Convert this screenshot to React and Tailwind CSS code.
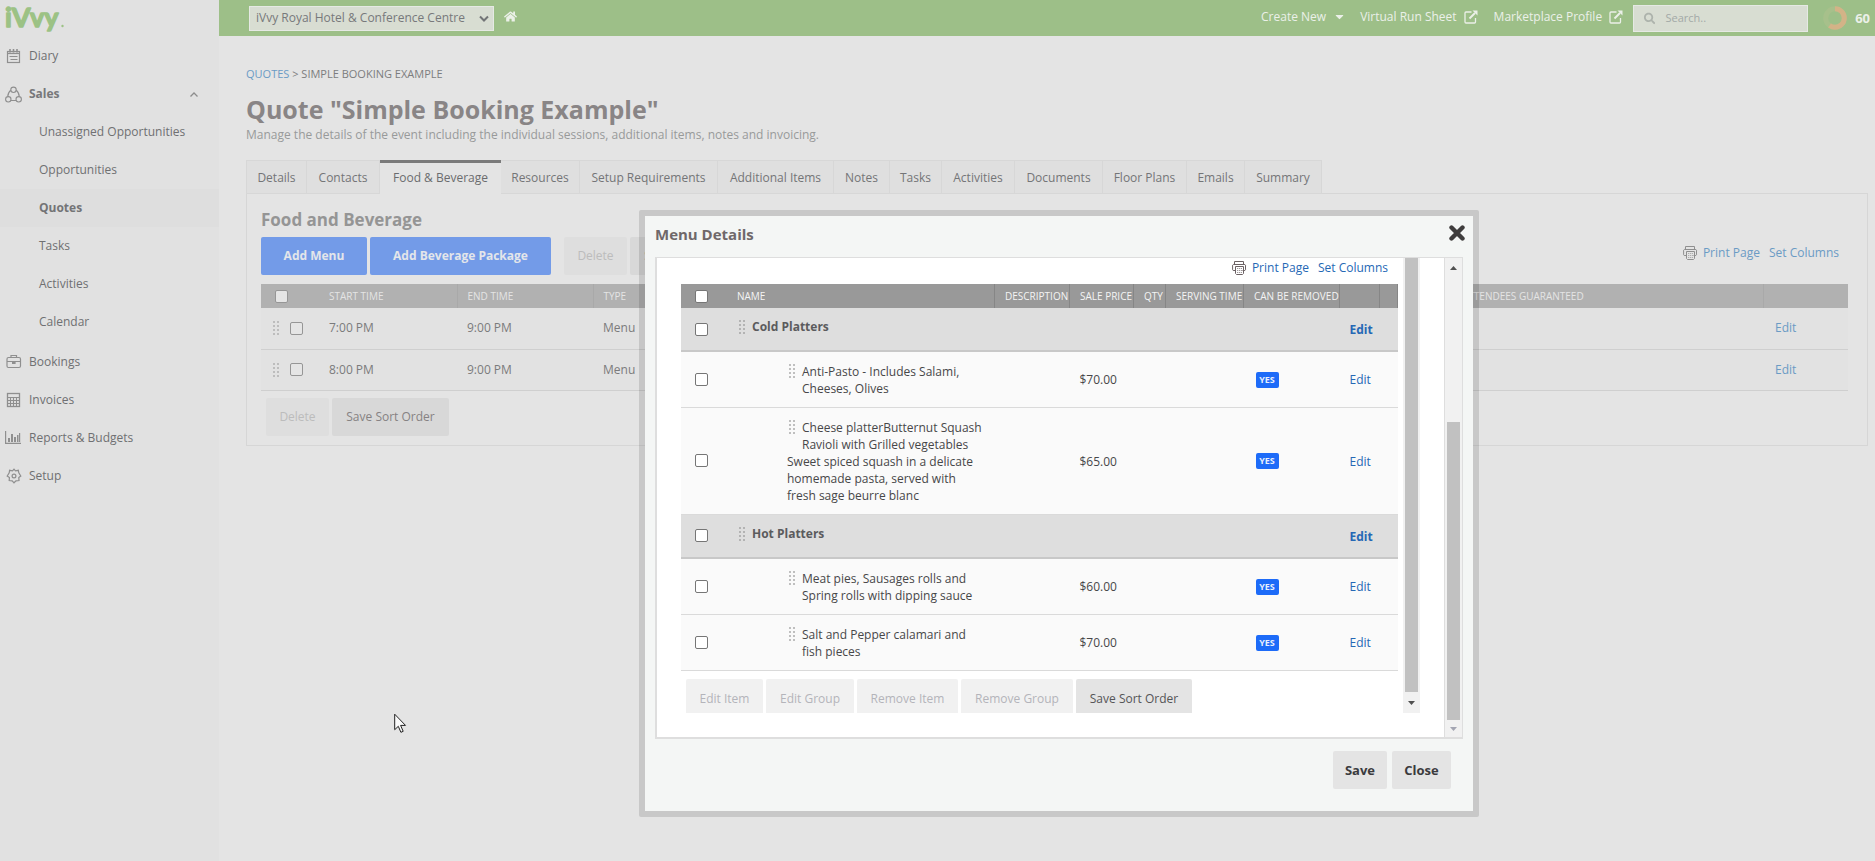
import React from "react";
import { FaHome, FaSearch, FaCaretDown } from "react-icons/fa";

const DiaryIcon = () => (
  <svg width="16" height="16" viewBox="0 0 16 16" fill="none" stroke="currentColor">
    <rect x="1.500" y="3.500" width="12" height="11" strokeWidth="1.200" />
    <path d="M1.500 5.500H13.500" strokeWidth="1.200" />
    <path d="M4 1v3.500M7.500 1v3.500M11 1v3.500" strokeWidth="1.600" />
    <path d="M3.500 8.500h8M4.500 11.500h7" strokeWidth="1.200" />
  </svg>
);
const SalesIcon = () => (
  <svg width="17" height="17" viewBox="0 0 17 17" fill="none" stroke="currentColor" strokeWidth="1.1">
    <circle cx="8.500" cy="3.800" r="2.700" />
    <circle cx="3.300" cy="13.300" r="2.700" />
    <circle cx="13.700" cy="13.300" r="2.700" />
    <path d="M5.800 4.200Q2.900 6.500 2.700 10.600M11.200 4.200Q14.100 6.500 14.300 10.600M6 14.500h5" />
  </svg>
);
const BookingsIcon = () => (
  <svg width="16" height="16" viewBox="0 0 16 16" fill="none" stroke="currentColor">
    <rect x="1" y="3.500" width="13.500" height="10" rx="1.500" strokeWidth="1.200" />
    <path d="M5 3.500v-2h5.500v2M1 7.500h13.500" strokeWidth="1.200" />
    <rect x="6" y="7.500" width="3.600" height="2.500" fill="currentColor" stroke="none" />
  </svg>
);
const InvoicesIcon = () => (
  <svg width="16" height="16" viewBox="0 0 16 16" fill="none" stroke="currentColor">
    <rect x="1.500" y="1.500" width="12" height="13" strokeWidth="1.300" />
    <path d="M1.500 5.500h12M1.500 8.500h12M1.500 11.500h12M4.500 5.500v9M7.500 5.500v9M10.500 5.500v9" strokeWidth="1.100" />
  </svg>
);
const ReportsIcon = () => (
  <svg width="17" height="16" viewBox="0 0 17 16" fill="currentColor">
    <path d="M0 1h1.200v11.800H16V14H0zM3 8h2v4H3zM6 4h2v8H6zM9 7h2v5H9zM12 5h1.500v7H12zM14 3h1.200v9H14z" />
  </svg>
);
const SetupIcon = () => (
  <svg width="16" height="16" viewBox="0 0 16 16" fill="none" stroke="currentColor" strokeWidth="1.200">
    <path d="M6.500 2.800 8 1.200l1.500 1.600 2.800-.5.500 2.500L14.800 8l-2 1.500.2 3-3 .4L8 14.800l-1.800-1.900-3-.4.200-3L1.200 8l2-3.200.4-2.500z" />
    <circle cx="8" cy="8" r="1.900" />
  </svg>
);
const PrinterIcon = () => (
  <svg width="15" height="16" viewBox="0 0 15 16" fill="none" stroke="currentColor">
    <path d="M2.500 4.500v-3h9v3M3.500 10.500H1.200L.600 9.800V5.200l.700-.700h11.600l.600.700v4.600l-.600.700h-2.400" />
    <path d="M3.500 6.500h8v7l-1 1h-6l-1-1z" />
    <path d="M5 8.500h5M5 10.500h5M5 12.500h5" strokeDasharray="1.300 .700" strokeOpacity=".65" />
  </svg>
);

const Grip = () => (
  <svg className="shrink-0" width="6" height="14" viewBox="0 0 6 14" fill="currentColor" aria-hidden="true">
    {[0, 4, 8, 12].map((y) => (
      <g key={y}>
        <rect x="0" y={y} width="2" height="2" />
        <rect x="4" y={y} width="2" height="2" />
      </g>
    ))}
  </svg>
);

const Check = ({ label, dim }) => (
  <input
    type="checkbox"
    aria-label={label}
    className={
      dim
        ? "block size-[13px] shrink-0 appearance-none rounded-[2px] border border-[#969696] bg-[#e5e5e5]"
        : "block size-[13px] shrink-0 appearance-none rounded-[2px] border border-[#767676] bg-white"
    }
  />
);

const NavItem = ({ icon: Icon, label, bold, open }) => (
  <li>
    <a href="#" className={"flex h-[38px] items-center pr-[21px] pl-[5px] " + (bold ? "font-bold text-[#77787a]" : "")}>
      <span className="mr-[7px] flex w-[17px] justify-center text-[#8f8f8f]">
        <Icon />
      </span>
      <span className="flex-1">{label}</span>
      {open && (
        <svg width="8" height="5" viewBox="0 0 8 5" fill="none" stroke="#8d8d8d" strokeWidth="1.300">
          <path d="M.5 4.500 4 1l3.500 3.500" />
        </svg>
      )}
    </a>
  </li>
);

const subItems = ["Unassigned Opportunities", "Opportunities", "Quotes", "Tasks", "Activities", "Calendar"];

const tabs = [
  ["Details", "w-[61px]"],
  ["Contacts", "w-[73px]"],
  ["Food & Beverage", "w-[121px]"],
  ["Resources", "w-[79px]"],
  ["Setup Requirements", "w-[138px]"],
  ["Additional Items", "w-[116px]"],
  ["Notes", "w-[56px]"],
  ["Tasks", "w-[52px]"],
  ["Activities", "w-[73px]"],
  ["Documents", "w-[88px]"],
  ["Floor Plans", "w-[84px]"],
  ["Emails", "w-[58px]"],
  ["Summary", "w-[77px]"],
];

const menuRows = [
  { group: true, name: "Cold Platters", h: "h-[43px]" },
  { name: "Anti-Pasto - Includes Salami, Cheeses, Olives", price: "$70.00", h: "h-[56px]" },
  {
    name: "Cheese platterButternut Squash Ravioli with Grilled vegetables",
    note: "Sweet spiced squash in a delicate homemade pasta, served with fresh sage beurre blanc",
    price: "$65.00",
    h: "h-[107px]",
  },
  { group: true, name: "Hot Platters", h: "h-[44px]" },
  { name: "Meat pies, Sausages rolls and Spring rolls with dipping sauce", price: "$60.00", h: "h-[56px]" },
  { name: "Salt and Pepper calamari and fish pieces", price: "$70.00", h: "h-[56px]" },
];

function Sidebar() {
  return (
    <nav className="w-[219px] shrink-0 bg-[#e1e1e1] text-[#6f7072]">
      <a href="#" aria-label="iVvy home" className="block h-9">
        <svg width="70" height="36" viewBox="0 0 70 36" className="overflow-visible font-['Lato',sans-serif]">
          <text x="5" y="27" fontSize="27" fontWeight="700" fill="#9cc285" stroke="#9cc285" strokeWidth="1.400" strokeLinejoin="round">
            iVvy
          </text>
          <circle cx="62.500" cy="26" r="1.200" fill="#9cc285" />
        </svg>
      </a>
      <ul className="pt-px">
        <NavItem icon={DiaryIcon} label="Diary" />
        <NavItem icon={SalesIcon} label="Sales" bold open />
        <li>
          <ul className="pb-[2px]">
            {subItems.map((s) => (
              <li key={s} className={s === "Quotes" ? "bg-[#dedede] font-bold text-[#737476]" : ""}>
                <a href="#" className="flex h-[38px] items-center pl-[39px]">
                  {s}
                </a>
              </li>
            ))}
          </ul>
        </li>
        <NavItem icon={BookingsIcon} label="Bookings" />
        <NavItem icon={InvoicesIcon} label="Invoices" />
        <NavItem icon={ReportsIcon} label="Reports & Budgets" />
        <NavItem icon={SetupIcon} label="Setup" />
      </ul>
    </nav>
  );
}

const LinkOut = () => (
  <svg width="14" height="14" viewBox="0 0 14 14" fill="none" stroke="currentColor">
    <path d="M7.500 2H2Q1 2 1 3v9q0 1 1 1h8.500q1 0 1-1V8" strokeWidth="1.300" />
    <path d="M5.500 8.500 11 3" strokeWidth="2" />
    <path d="M8.500.500H13.500V5.500z" fill="currentColor" stroke="none" />
  </svg>
);

function TopBar() {
  return (
    <header className="flex h-9 items-center bg-[#9dbf88] pl-[30px] text-[#ebf0e8]">
      <div className="relative">
        <select
          aria-label="Venue"
          className="h-[25px] w-[245px] appearance-none border border-[#e6e9e4] bg-[#d8ddd2] pl-[6px] text-[#77797b]"
        >
          <option>iVvy Royal Hotel &amp; Conference Centre</option>
        </select>
        <svg className="pointer-events-none absolute top-[9px] right-[5px]" width="10" height="7" viewBox="0 0 10 7" fill="none" stroke="#727476" strokeWidth="2">
          <path d="M1 1.500l4 4 4-4" />
        </svg>
      </div>
      <a href="#" aria-label="Home" className="ml-[10px] pb-[3px]">
        <FaHome size={13} />
      </a>
      <div className="ml-auto flex items-center">
        <button className="mr-[14px] flex items-center gap-[7px] pb-[3px]">
          Create New <FaCaretDown size={13} />
        </button>
        <a href="#" className="mr-[16px] flex items-center gap-[7px] pb-[3px]">
          Virtual Run Sheet <LinkOut />
        </a>
        <a href="#" className="mr-[10px] flex items-center gap-[7px] pb-[3px]">
          Marketplace Profile <LinkOut />
        </a>
        <label className="flex h-[27px] w-[175px] items-center border border-[#e6e9e4] bg-[#d8ddd2] pl-[10px]">
          <FaSearch size={13} color="#adb3ac" />
          <input
            type="search"
            aria-label="Search"
            placeholder="Search.."
            className="ml-[10px] w-full min-w-0 bg-transparent text-[11px] outline-none placeholder:text-[#a3a9a7]"
          />
        </label>
        <svg className="ml-[15px]" width="24" height="24" viewBox="0 0 24 24" fill="none" strokeWidth="5">
          <circle cx="12" cy="12" r="9.300" stroke="#a7c08b" />
          <circle cx="12" cy="12" r="9.300" stroke="#d3b387" pathLength="100" strokeDasharray="60 40" transform="rotate(-90 12 12)" />
        </svg>
        <span className="mr-[5px] ml-[8px] text-[13px] font-bold">60</span>
      </div>
    </header>
  );
}

function PageTools({ dim }) {
  return (
    <div className={"flex items-center " + (dim ? "text-[#6b9bc5]" : "text-[#2568b5]")}>
      <span className={"mr-[5px] " + (dim ? "text-[#8f8f8f]" : "text-[#6b6163]")}>
        <PrinterIcon />
      </span>
      <a href="#" className="mr-[9px]">
        Print Page
      </a>
      <a href="#">Set Columns</a>
    </div>
  );
}

function Content() {
  return (
    <main className="pt-[29px] pr-[7px] pl-[27px]">
      <div className="text-[11px] leading-[18px] text-[#7c7d7e]">
        <a href="#" className="text-[#6b9bc5]">
          QUOTES
        </a>{" "}
        &gt; SIMPLE BOOKING EXAMPLE
      </div>
      <h1 className="mt-[9px] text-[25px] leading-[34px] font-bold text-[#898586]">Quote "Simple Booking Example"</h1>
      <p className="leading-[18px] text-[#989a9a]">
        Manage the details of the event including the individual sessions, additional items, notes and invoicing.
      </p>
      <div role="tablist" className="relative z-10 mt-[16px] -mb-px flex h-[34px] text-[#747577]">
        {tabs.map(([t, w]) => (
          <button
            key={t}
            role="tab"
            aria-selected={t === "Food & Beverage"}
            className={
              w +
              " shrink-0 whitespace-nowrap " +
              (t === "Food & Beverage"
                ? "border-t-[3px] border-t-[#7b7b7b] bg-[#e4e4e4] pb-[2px] text-[#6b6c6e]"
                : "border-y border-r border-[#d7d7d7] bg-[#dfdfdf] pt-[2px] first:border-l")
            }
          >
            {t}
          </button>
        ))}
      </div>
      <section className="border border-[#d6d6d6] px-[14px] pb-[9px]">
        <div className="flex items-end justify-between pt-[14px]">
          <div>
            <h2 className="text-[17px] leading-[24px] font-bold text-[#959595]">Food and Beverage</h2>
            <div className="mt-[5px] flex gap-[3px]">
              <button className="h-[38px] w-[106px] rounded-[2px] bg-[#739be8] font-bold text-[#e3e6ea]">Add Menu</button>
              <button className="h-[38px] w-[181px] rounded-[2px] bg-[#739be8] font-bold text-[#e3e6ea]">
                Add Beverage Package
              </button>
              <button disabled className="ml-[10px] h-[38px] w-[63px] rounded-[2px] bg-[#dedede] text-[#bcbcbc]">
                Delete
              </button>
              <button className="h-[38px] w-[117px] rounded-[2px] bg-[#d8d8d8] text-[#868283]">Save Sort Order</button>
            </div>
          </div>
          <div className="mr-[14px] mb-[13px]">
            <PageTools dim />
          </div>
        </div>
        <table className="mt-[9px] mr-[5px] w-[calc(100%-5px)] table-fixed text-left text-[#7b7b7c]">
          <thead className="bg-[#b1b1b1] text-[10px] text-[#e4e4e4]">
            <tr className="h-6">
              <th className="w-[58px] pl-[14px]">
                <Check dim label="Select all sessions" />
              </th>
              <th className="w-[138px] border-r border-[#a9a9a9] pl-[10px] font-medium">START TIME</th>
              <th className="w-[136px] border-r border-[#a9a9a9] pl-[10px] font-medium">END TIME</th>
              <th className="w-[859px] pl-[10px] font-medium">TYPE</th>
              <th className="pl-[10px] font-medium whitespace-nowrap">ATTENDEES GUARANTEED</th>
              <th className="w-[85px] border-l border-[#a9a9a9]" />
            </tr>
          </thead>
          <tbody>
            {["7:00 PM", "8:00 PM"].map((t) => (
              <tr key={t} className="h-[41px] border-b border-[#cfcfcf] bg-[#e2e2e2]">
                <td className="pl-[12px]">
                  <div className="flex items-center gap-[11px] text-[#bdbdbd]">
                    <Grip />
                    <Check dim label={"Select session at " + t} />
                  </div>
                </td>
                <td className="pl-[10px]">{t}</td>
                <td className="pl-[10px]">9:00 PM</td>
                <td className="pl-[10px]">Menu</td>
                <td />
                <td className="pl-[12px]">
                  <a href="#" className="text-[#6b9bc5]">
                    Edit
                  </a>
                </td>
              </tr>
            ))}
          </tbody>
        </table>
        <div className="mt-[7px] ml-[5px] flex gap-[3px]">
          <button disabled className="h-[38px] w-[63px] rounded-[2px] bg-[#dedede] text-[#bcbcbc]">
            Delete
          </button>
          <button className="h-[38px] w-[117px] rounded-[2px] bg-[#d8d8d8] text-[#868283]">Save Sort Order</button>
        </div>
      </section>
    </main>
  );
}

const Arrow = ({ up, light }) => (
  <svg className="shrink-0" width="7" height="4" viewBox="0 0 7 4" fill={light ? "#a3a5b2" : "#505050"} aria-hidden="true">
    <path d={up ? "M0 4 3.500 0 7 4z" : "M0 0 3.500 4 7 0z"} />
  </svg>
);

const headCell = "border-r border-[#868686] pl-[10px] font-medium whitespace-nowrap";

function MenuTable() {
  return (
    <table className="w-full table-fixed text-left text-[#474749]">
      <thead className="bg-[#999999] text-[10px] text-[#f4f4f4]">
        <tr className="h-6">
          <th className="w-[46px] pl-[14px]">
            <Check label="Select all items" />
          </th>
          <th className={headCell}>NAME</th>
          <th className={headCell + " w-[75px]"}>DESCRIPTION</th>
          <th className={headCell + " w-[64px]"}>SALE PRICE</th>
          <th className={headCell + " w-[32px]"}>QTY</th>
          <th className={headCell + " w-[78px]"}>SERVING TIME</th>
          <th className={headCell + " w-[96px]"}>CAN BE REMOVED</th>
          <th className={headCell + " w-[40px]"} />
          <th className={headCell + " w-[18px]"} />
        </tr>
      </thead>
      <tbody>
        {menuRows.map((r) =>
          r.group ? (
            <tr key={r.name} className={r.h + " border-b-2 border-[#c8c8c8] bg-[#dedede] font-bold text-[#5b5b5d]"}>
              <td className="pl-[14px]">
                <Check label={"Select " + r.name} />
              </td>
              <td className="pl-[12px]" colSpan={6}>
                <div className="mb-[4px] flex items-center gap-[7px]">
                  <span className="text-[#b3b3b3]">
                    <Grip />
                  </span>
                  {r.name}
                </div>
              </td>
              <td className="pt-[2px] pl-[10px]" colSpan={2}>
                <a href="#" className="text-[#2568b5]">
                  Edit
                </a>
              </td>
            </tr>
          ) : (
            <tr key={r.name} className={r.h + " border-b border-[#dadada] bg-[#fafafa]"}>
              <td className="pl-[14px]">
                <Check label={"Select " + r.name} />
              </td>
              <td className="pt-px pr-[8px] pl-[60px] leading-[17px]">
                <div className="flex gap-[7px]">
                  <span className="ml-[2px] pt-px text-[#bfbfbf]">
                    <Grip />
                  </span>
                  <span>{r.name}</span>
                </div>
                {r.note && <p className="pr-[8px]">{r.note}</p>}
              </td>
              <td />
              <td className="pt-[2px] pl-[10px]">{r.price}</td>
              <td />
              <td />
              <td className="pt-px pl-[12px]">
                <span className="block h-4 w-[23px] rounded-[2px] bg-[#1d6bf8] text-center text-[9px] leading-4 font-bold text-[#e8effd]">
                  YES
                </span>
              </td>
              <td className="pt-[2px] pl-[10px]" colSpan={2}>
                <a href="#" className="text-[#2568b5]">
                  Edit
                </a>
              </td>
            </tr>
          )
        )}
      </tbody>
    </table>
  );
}

function MenuDialog() {
  const off = "h-[38px] rounded-[2px] bg-[#f1f1f1] pt-[2px] text-[#b4b4ba] ";
  return (
    <div role="dialog" aria-label="Menu Details" className="w-[840px] rounded-[2px] bg-black/12 p-[6px]">
      <div className="bg-[#f4f6f5] px-[10px] pb-[22px]">
        <div className="flex h-[41px] items-start justify-between pt-[7px]">
          <h2 className="text-[15px] leading-[22px] font-bold text-[#6f686a]">Menu Details</h2>
          <button aria-label="Close dialog" className="-mr-[2px] pt-[2px]">
            <svg width="16" height="16" viewBox="0 0 16 16" fill="none" stroke="#3f3d3d" strokeWidth="4.400" strokeLinecap="round">
              <path d="M2.500 2.500l11 11M13.500 2.500l-11 11" />
            </svg>
          </button>
        </div>
        <div className="flex border border-b-2 border-l-2 border-[#dedede] bg-white">
          <div className="flex flex-1 pl-[24px]">
            <div className="h-[455px] flex-1 overflow-hidden">
              <div className="flex h-[26px] items-start justify-end pt-px pr-[10px]">
                <PageTools />
              </div>
              <MenuTable />
              <div className="mt-[8px] ml-[5px] flex gap-[3px]">
                <button disabled className={off + "w-[77px]"}>Edit Item</button>
                <button disabled className={off + "w-[88px]"}>Edit Group</button>
                <button disabled className={off + "w-[101px]"}>Remove Item</button>
                <button disabled className={off + "w-[112px]"}>Remove Group</button>
                <button className="h-[38px] w-[116px] rounded-[2px] bg-[#e4e4e4] pt-[2px] text-[#555557]">Save Sort Order</button>
              </div>
            </div>
            <div aria-hidden="true" className="mr-[24px] ml-[5px] flex h-[455px] w-[17px] flex-col items-center bg-[#f1f1f1]">
              <div className="w-[13px] flex-1 bg-[#c1c1c1]" />
              <div className="flex h-[21px] items-center">
                <Arrow />
              </div>
            </div>
          </div>
          <div aria-hidden="true" className="flex h-[479px] w-[18px] flex-col items-center border-l border-[#dedede] bg-[#f1f1f1]">
            <div className="flex h-[20px] items-center">
              <Arrow up />
            </div>
            <div className="mt-[144px] w-[13px] flex-1 bg-[#c1c1c1]" />
            <div className="flex h-[17px] items-center">
              <Arrow light />
            </div>
          </div>
        </div>
        <div className="mt-[12px] mr-[12px] flex justify-end gap-[5px] text-[13px] font-bold text-[#3b3b3e]">
          <button className="h-[38px] w-[54px] rounded-[2px] bg-[#e4e4e4]">Save</button>
          <button className="h-[38px] w-[59px] rounded-[2px] bg-[#e4e4e4]">Close</button>
        </div>
      </div>
    </div>
  );
}

export default function App() {
  return (
    <div className="relative flex min-h-screen overflow-hidden bg-[#e4e4e4] font-['Open_Sans',sans-serif] text-[12px] leading-[18px]">
      <Sidebar />
      <div className="min-w-0 flex-1">
        <TopBar />
        <Content />
      </div>
      <div className="absolute inset-0 z-20 flex items-start justify-center pt-[210px] pl-[243px]">
        <MenuDialog />
      </div>
      <svg className="absolute top-[713px] left-[394px] z-30" width="13" height="21" viewBox="0 0 13 21" fill="#fafafa" stroke="#222" aria-hidden="true">
        <path d="M.700 1.200v15.500l3.600-3.400 2.600 6 2.300-1-2.600-5.900h4.900z" />
      </svg>
    </div>
  );
}
